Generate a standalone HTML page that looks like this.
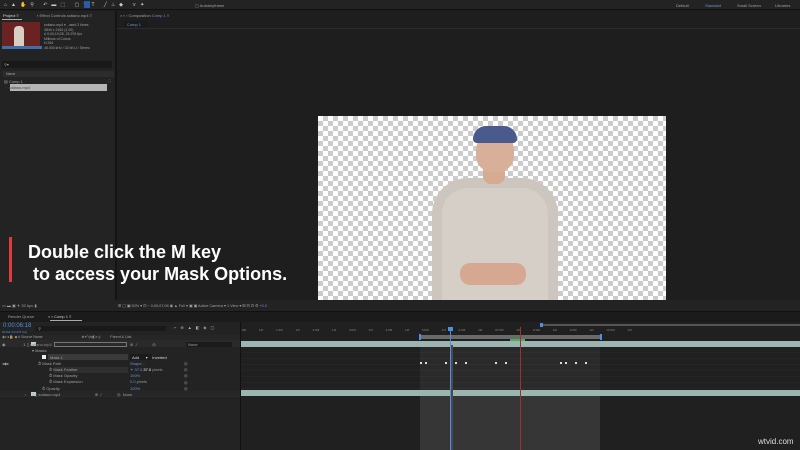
<!DOCTYPE html>
<html><head><style>
*{margin:0;padding:0;box-sizing:border-box}
body{width:800px;height:450px;background:#1d1d1d;position:relative;overflow:hidden;font-family:"Liberation Sans",sans-serif;color:#9a9a9a;font-size:4px}
.a{position:absolute}
.t{position:absolute;white-space:nowrap;font-size:4px;color:#a0a0a0}
.checker{background-color:#fff;background-image:linear-gradient(45deg,#ccc 25%,transparent 25%,transparent 75%,#ccc 75%),linear-gradient(45deg,#ccc 25%,transparent 25%,transparent 75%,#ccc 75%);background-size:10px 10px;background-position:0 0,5px 5px}
.row{position:absolute;left:0;width:240px;height:6px;border-bottom:1px solid #2a2a2a}
.kf{position:absolute;width:2px;height:2px;background:#ddd;top:362px}
</style></head><body>
<div class="a" style="left:0;top:0;width:800px;height:10px;background:#232323;border-bottom:1px solid #111"></div>
<div class="t" style="left:4px;top:2px;color:#ccc;font-size:5px;letter-spacing:4px">⌂▲✋⚲ ↶▬⬚ ▢✎T ╱⊥◆ ⋎✦</div>
<div class="a" style="left:84px;top:1px;width:6px;height:7px;background:#2d5aa0"></div>
<div class="t" style="left:195px;top:3px">▢ Autokeyframe</div>
<div class="t" style="left:676px;top:3px">Default</div>
<div class="t" style="left:705px;top:3px;color:#6a93d4">Standard</div>
<div class="t" style="left:737px;top:3px">Small Screen</div>
<div class="t" style="left:775px;top:3px">Libraries</div>
<div class="a" style="left:0;top:11px;width:115px;height:300px;background:#232323"></div>
<div class="a" style="left:115px;top:11px;width:2px;height:300px;background:#141414"></div>
<div class="t" style="left:3px;top:13px;color:#ddd">Project ≡</div>
<div class="a" style="left:2px;top:19px;width:20px;height:1px;background:#aaa"></div>
<div class="t" style="left:37px;top:13px">▪ Effect Controls sotiano.mp4 ≡</div>
<div class="a" style="left:2px;top:22px;width:38px;height:24px;background:#6a2222"></div>
<div class="a" style="left:14px;top:26px;width:10px;height:20px;background:#d8cfc4;border-radius:4px 4px 0 0"></div>
<div class="a" style="left:2px;top:46px;width:40px;height:3px;background:#3f6ea8"></div>
<div class="t" style="left:44px;top:23px;line-height:4.6px;font-size:3.5px">sotiano.mp4 ▾ , used 2 times<br>3840 x 2160 (1.00)<br>Δ 0;00;10;05, 23.976 fps<br>Millions of Colors<br>H.264<br>48.000 kHz / 32 bit U / Stereo</div>
<div class="a" style="left:2px;top:61px;width:110px;height:7px;background:#191919"></div>
<div class="t" style="left:4px;top:62px">⚲▾</div>
<div class="a" style="left:3px;top:71px;width:111px;height:6px;background:#2c2c2c"></div>
<div class="t" style="left:6px;top:72px;font-size:3.5px">Name</div>
<div class="t" style="left:4px;top:79px">▤ Comp 1</div>
<div class="t" style="left:108px;top:78px;color:#ccc">⸫</div>
<div class="a" style="left:10px;top:84px;width:97px;height:7px;background:#b4b4b4"></div>
<div class="t" style="left:5px;top:85px;color:#333">▯ <span style="color:#444">sotiano.mp4</span></div>
<div class="a" style="left:117px;top:11px;width:683px;height:300px;background:#1e1e1e"></div>
<div class="t" style="left:120px;top:13px">× ▪ ▫ Composition <span style="color:#6a93d4">Comp 1</span> ≡</div>
<div class="a" style="left:124px;top:21px;width:23px;height:6px;background:#1a1a1a"></div>
<div class="t" style="left:127px;top:22px;color:#6a93d4">Comp 1</div>
<div class="a" style="left:117px;top:28px;width:683px;height:1px;background:#2b2b2b"></div>
<div class="a checker" style="left:318px;top:116px;width:348px;height:185px"></div>
<div class="a" style="left:432px;top:178px;width:126px;height:123px;background:#cdc6be;border-radius:36px 36px 0 0"></div>
<div class="a" style="left:442px;top:188px;width:106px;height:113px;background:#d6cfc7;border-radius:26px 26px 0 0"></div>
<div class="a" style="left:483px;top:160px;width:22px;height:24px;background:#d7aa92;border-radius:0 0 8px 8px"></div>
<div class="a" style="left:476px;top:132px;width:38px;height:40px;background:#d8b09a;border-radius:18px 18px 16px 16px"></div>
<div class="a" style="left:473px;top:126px;width:44px;height:17px;background:#4a5a8c;border-radius:20px 20px 6px 6px"></div>
<div class="a" style="left:460px;top:263px;width:66px;height:22px;background:#d6a891;border-radius:10px"></div>
<div class="a" style="left:117px;top:300px;width:683px;height:11px;background:#232323"></div>
<div class="a" style="left:0;top:300px;width:117px;height:11px;background:#232323"></div>
<div class="t" style="left:2px;top:303px">▭ ▬ ▣ ✈  32 bpc  ▮</div>
<div class="t" style="left:118px;top:303px;font-size:3.8px">⊞ ▢ ▣  50%  ▾ ⊡ ⌐  0;00;07;08  ◉  ▲ Full  ▾  ▣ ▣ Active Camera ▾  1 View ▾ ⊞ ⊟ ⊡ ⚙ <span style="color:#6a93d4">+0.0</span></div>
<div class="a" style="left:9px;top:237px;width:3px;height:45px;background:#e03a3a"></div>
<div class="t" style="left:28px;top:241px;font-size:18px;font-weight:bold;color:#fff;line-height:22px">Double click the M key<br>&nbsp;to access your Mask Options.</div>
<div class="a" style="left:0;top:311px;width:800px;height:11px;background:#1b1b1b;border-top:1px solid #111"></div>
<div class="t" style="left:8px;top:314px">Render Queue</div>
<div class="t" style="left:48px;top:314px;color:#ccc">× ▪ Comp 1 ≡</div>
<div class="a" style="left:50px;top:320px;width:32px;height:1px;background:#aaa"></div>
<div class="a" style="left:0;top:322px;width:240px;height:128px;background:#232323"></div>
<div class="a" style="left:240px;top:322px;width:1px;height:128px;background:#111"></div>
<div class="t" style="left:3px;top:323px;font-size:6px;color:#4d8fe0">0:00:06:18</div>
<div class="t" style="left:2px;top:330px;font-size:3px;color:#4d8fe0">00162 (23.976 fps)</div>
<div class="a" style="left:36px;top:326px;width:130px;height:5px;background:#191919"></div>
<div class="t" style="left:38px;top:326px">⚲</div>
<div class="t" style="left:174px;top:325px;letter-spacing:4px;color:#bbb">⌐⊕▲◧◈▢</div>
<div class="row" style="top:335px;background:#262626"></div>
<div class="t" style="left:2px;top:335px;font-size:3.5px">◉◐●🔒 ◆ #  Source Name &nbsp;&nbsp;&nbsp;&nbsp;&nbsp;&nbsp;&nbsp;&nbsp;&nbsp;&nbsp;&nbsp;&nbsp;&nbsp;&nbsp;&nbsp;&nbsp;&nbsp;&nbsp;&nbsp;&nbsp;&nbsp;&nbsp;&nbsp;&nbsp;&nbsp;&nbsp;&nbsp;&nbsp;&nbsp;&nbsp;&nbsp;&nbsp;&nbsp;&nbsp;&nbsp;&nbsp;&nbsp;&nbsp; ⊕✦╲fx◧◐◎  &nbsp;&nbsp;&nbsp;&nbsp;&nbsp;&nbsp;&nbsp;&nbsp; Parent &amp; Link</div>
<div class="row" style="top:341px;background:#2a2a2a"></div>
<div class="a" style="left:54px;top:342px;width:73px;height:5px;border:1px solid #777"></div>
<div class="a" style="left:31px;top:342px;width:5px;height:4px;background:#bdd3cc"></div>
<div class="t" style="left:2px;top:342px">◉ &nbsp;&nbsp;&nbsp;&nbsp;&nbsp;&nbsp;&nbsp;&nbsp;&nbsp;&nbsp;&nbsp;&nbsp;&nbsp;&nbsp; 1 ▯ <span style="color:#888">sotiano.mp4</span></div>
<div class="t" style="left:130px;top:342px">⊕ &nbsp;/ &nbsp;&nbsp;&nbsp;&nbsp;&nbsp;&nbsp;&nbsp;&nbsp;&nbsp;&nbsp;&nbsp;&nbsp; ◎</div>
<div class="a" style="left:186px;top:342px;width:46px;height:5px;background:#1b1b1b"></div>
<div class="t" style="left:188px;top:342px">None</div>
<div class="t" style="left:32px;top:348px">▾ Masks</div>
<div class="a" style="left:48px;top:354px;width:80px;height:6px;background:#3a3a3a"></div>
<div class="a" style="left:42px;top:355px;width:4px;height:4px;background:#eee"></div>
<div class="t" style="left:50px;top:355px">Mask 1</div>
<div class="a" style="left:130px;top:354px;width:22px;height:6px;background:#1b1b1b"></div>
<div class="t" style="left:132px;top:355px;color:#ddd">Add &nbsp;&nbsp;&nbsp;&nbsp; ▾ &nbsp;&nbsp; Inverted</div>
<div class="t" style="left:2px;top:361px">◂◆▸ &nbsp;&nbsp;&nbsp;&nbsp;&nbsp;&nbsp;&nbsp;&nbsp;&nbsp;&nbsp;&nbsp;&nbsp;&nbsp;&nbsp;&nbsp;&nbsp;&nbsp;&nbsp;&nbsp;&nbsp;&nbsp;&nbsp;&nbsp;&nbsp; ⏱ Mask Path</div>
<div class="t" style="left:130px;top:361px;color:#6a93d4">Shape...</div>
<div class="a" style="left:54px;top:367px;width:74px;height:6px;background:#2f2f2f"></div>
<div class="t" style="left:49px;top:367px">⏱ Mask Feather</div>
<div class="t" style="left:130px;top:367px;color:#6a93d4">⚭ 37.0,<span style="color:#fff">37.0</span> <span style="color:#999">pixels</span></div>
<div class="t" style="left:49px;top:373px">⏱ Mask Opacity</div>
<div class="t" style="left:130px;top:373px;color:#6a93d4">100%</div>
<div class="t" style="left:49px;top:379px">⏱ Mask Expansion</div>
<div class="t" style="left:130px;top:379px;color:#6a93d4">0.0 <span style="color:#999">pixels</span></div>
<div class="t" style="left:42px;top:386px">⏱ Opacity</div>
<div class="t" style="left:130px;top:386px;color:#6a93d4">100%</div>
<div class="t" style="left:184px;top:361px;line-height:6.2px">◎<br>◎<br>◎<br>◎<br>◎</div>
<div class="row" style="top:391px;background:#262626"></div>
<div class="a" style="left:31px;top:392px;width:5px;height:4px;background:#bdd3cc"></div>
<div class="t" style="left:25px;top:392px">› &nbsp;&nbsp;&nbsp; 2 ▯ sotiano.mp4 &nbsp;&nbsp;&nbsp;&nbsp;&nbsp;&nbsp;&nbsp;&nbsp;&nbsp;&nbsp;&nbsp;&nbsp;&nbsp;&nbsp;&nbsp;&nbsp;&nbsp;&nbsp;&nbsp;&nbsp;&nbsp;&nbsp;&nbsp;&nbsp;&nbsp;&nbsp;&nbsp;&nbsp;&nbsp; ⊕ &nbsp;/ &nbsp;&nbsp;&nbsp;&nbsp;&nbsp;&nbsp;&nbsp;&nbsp;&nbsp;&nbsp;&nbsp;&nbsp; ◎ &nbsp;None</div>
<div class="a" style="left:241px;top:322px;width:559px;height:128px;background:#202020"></div>
<div class="a" style="left:540px;top:324px;width:260px;height:2px;background:#555"></div>
<div class="a" style="left:540px;top:323px;width:3px;height:4px;background:#4d8fe0"></div>
<div class="t" style="left:242px;top:328px;font-size:3px;color:#888;word-spacing:12px">00f 12f 1:00f 12f 2:00f 12f 3:00f 12f 4:00f 12f 5:00f 12f 6:00f 12f 07:00f 12f 8:00f 12f 9:00f 12f 10:00f 12f</div>
<div class="a" style="left:420px;top:335px;width:180px;height:4px;background:#6a6a6a"></div>
<div class="a" style="left:419px;top:334px;width:2px;height:6px;background:#4d8fe0"></div>
<div class="a" style="left:600px;top:334px;width:2px;height:6px;background:#4d8fe0"></div>
<div class="a" style="left:510px;top:339px;width:15px;height:2px;background:#4caf50"></div>
<div class="a" style="left:420px;top:347px;width:180px;height:103px;background:#363636"></div>
<div class="a" style="left:241px;top:341px;width:559px;height:6px;background:#9cb5b0"></div>
<div class="a" style="left:241px;top:390px;width:559px;height:6px;background:#9cb5b0"></div>
<div class="a" style="left:241px;top:347px;width:559px;height:43px;background:repeating-linear-gradient(#1f1f1f 0,#1f1f1f 5px,#2a2a2a 5px,#2a2a2a 6px);opacity:.5"></div>
<div class="a" style="left:450px;top:345px;width:3px;height:105px;background:#4a4a4a"></div>
<div class="a" style="left:450px;top:327px;width:1px;height:123px;background:#4d8fe0"></div>
<div class="a" style="left:448px;top:327px;width:5px;height:4px;background:#4d8fe0"></div>
<div class="a" style="left:520px;top:327px;width:1px;height:123px;background:#a03030"></div>
<div class="kf" style="left:420px"></div><div class="kf" style="left:425px"></div>
<div class="kf" style="left:445px"></div><div class="kf" style="left:455px"></div><div class="kf" style="left:465px"></div>
<div class="kf" style="left:495px"></div><div class="kf" style="left:505px"></div>
<div class="kf" style="left:560px"></div><div class="kf" style="left:565px"></div><div class="kf" style="left:575px"></div><div class="kf" style="left:585px"></div>
<div class="t" style="left:758px;top:437px;font-size:8px;color:#ddd">wtvid.com</div>
</body></html>
